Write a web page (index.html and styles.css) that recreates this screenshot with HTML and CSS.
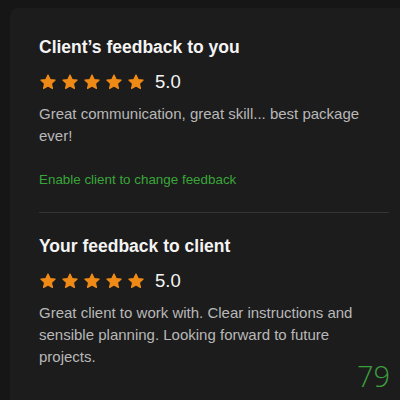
FILE: index.html
```html
<!DOCTYPE html>
<html lang="en">
<head>
<meta charset="utf-8">
<title>Feedback</title>
<link rel="stylesheet" href="styles.css">
</head>
<body>
<svg width="0" height="0" class="defs" aria-hidden="true">
  <defs>
    <symbol id="star" viewBox="0 0 24 24">
      <path d="M12 2.6l2.9 6.1 6.6.8-4.9 4.6 1.3 6.6L12 17.4l-5.9 3.3 1.3-6.6-4.9-4.6 6.6-.8z" fill="currentColor" stroke="currentColor" stroke-width="1.6" stroke-linejoin="round"/>
    </symbol>
  </defs>
</svg>
<main class="card">
  <section class="feedback">
    <h2 class="feedback-title">Client’s feedback to you</h2>
    <div class="rating">
      <div class="stars">
        <svg class="star"><use href="#star"/></svg>
        <svg class="star"><use href="#star"/></svg>
        <svg class="star"><use href="#star"/></svg>
        <svg class="star"><use href="#star"/></svg>
        <svg class="star"><use href="#star"/></svg>
      </div>
      <span class="score">5.0</span>
    </div>
    <p class="comment">Great communication, great skill... best package ever!</p>
    <a class="action" href="#">Enable client to change feedback</a>
  </section>
  <hr class="divider">
  <section class="feedback">
    <h2 class="feedback-title">Your feedback to client</h2>
    <div class="rating">
      <div class="stars">
        <svg class="star"><use href="#star"/></svg>
        <svg class="star"><use href="#star"/></svg>
        <svg class="star"><use href="#star"/></svg>
        <svg class="star"><use href="#star"/></svg>
        <svg class="star"><use href="#star"/></svg>
      </div>
      <span class="score">5.0</span>
    </div>
    <p class="comment">Great client to work with. Clear instructions and sensible planning. Looking forward to future projects.</p>
  </section>
</main>
<span class="page-count">79</span>
</body>
</html>
```

FILE: styles.css
```css
html, body {
  margin: 0;
  height: 100%;
}

body {
  background: #161616;
  font-family: "Liberation Sans", Arial, sans-serif;
  overflow: hidden;
  position: relative;
}

.defs {
  position: absolute;
}

.card {
  margin: 8px 0 0 10px;
  background: #1c1c1c;
  border-top-left-radius: 8px;
  padding: 28px 11px 40px 29px;
  min-height: 400px;
  box-sizing: border-box;
}

.feedback {
  display: flex;
  flex-direction: column;
}

.feedback-title {
  margin: 0;
  font-size: 17.5px;
  line-height: 22px;
  font-weight: 700;
  color: #f4f4f4;
}

.rating {
  display: flex;
  align-items: center;
  gap: 10px;
  height: 20px;
  margin-top: 14px;
}

.stars {
  display: flex;
  gap: 4px;
}

.star {
  width: 18px;
  height: 18px;
  color: #f08a17;
}

.score {
  font-size: 18.5px;
  line-height: 20px;
  color: #f4f4f4;
}

.comment {
  margin: 11px 0 0;
  font-size: 15px;
  line-height: 22px;
  color: #b8b8b8;
}

.action {
  margin-top: 23px;
  font-size: 13.4px;
  line-height: 20px;
  color: #3aa63a;
  text-decoration: none;
}

.divider {
  border: 0;
  height: 1px;
  background: #353535;
  margin: 22px 0 22px;
}

.page-count {
  position: absolute;
  right: 10px;
  bottom: 10px;
  font-family: "Open Sans", sans-serif;
  font-weight: 300;
  font-size: 29px;
  line-height: 29px;
  color: #3d9e3d;
}
```
